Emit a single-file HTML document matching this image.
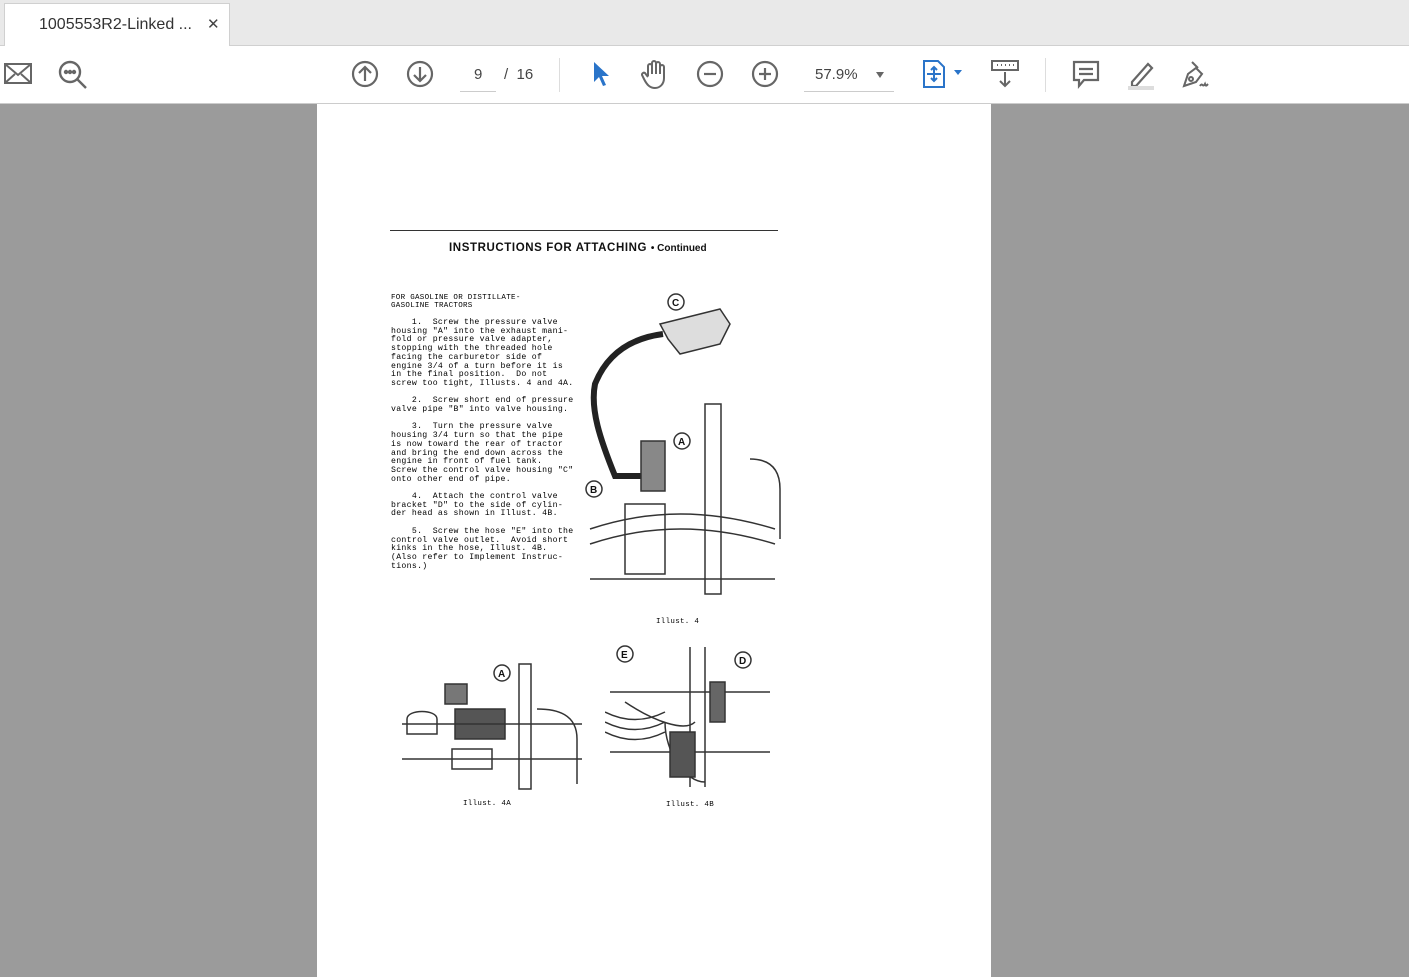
<!DOCTYPE html>
<html><head><meta charset="utf-8">
<style>
*{margin:0;padding:0;box-sizing:border-box}
body{width:1409px;height:977px;overflow:hidden;background:#9b9b9b;font-family:"Liberation Sans",sans-serif;position:relative}
#tabbar{position:absolute;left:0;top:0;width:1409px;height:46px;background:#e9e9e9;border-bottom:1px solid #d0d0d0}
#tab{position:absolute;left:4px;top:3px;width:226px;height:44px;background:#fff;border:1px solid #d0d0d0;border-bottom:none}
#tab span{position:absolute;left:34px;top:12px;font-size:16px;color:#333}
#tab b{position:absolute;left:202px;top:11px;font-size:15px;color:#444;font-weight:normal}
#tool{position:absolute;left:0;top:46px;width:1409px;height:58px;background:#fff;border-bottom:1px solid #ccc}
svg.i{position:absolute}
.txt{position:absolute;font-size:15px;color:#444}
#page{position:absolute;left:317px;top:104px;width:674px;height:873px;background:#fff}
.m{position:absolute;font-family:"Liberation Mono",monospace;font-size:8.2px;line-height:8.7px;color:#000;white-space:pre;letter-spacing:0.3px}
</style></head><body>
<div id="tabbar"><div id="tab"><span>1005553R2-Linked ...</span><b>✕</b></div></div>
<div id="tool">
<svg class="i" style="left:3px;top:16px" width="30" height="24" viewBox="0 0 30 24" fill="none" stroke="#666" stroke-width="2"><rect x="2" y="2" width="26" height="19"/><path d="M2 2l13 11 13-11M2 21l10-9M28 21l-10-9"/></svg>
<svg class="i" style="left:57px;top:13px" width="32" height="32" viewBox="0 0 32 32" fill="none" stroke="#666" stroke-width="2.4"><circle cx="13" cy="13" r="10"/><path d="M20 20l9 9"/><circle cx="9" cy="13" r="1" fill="#666"/><circle cx="13" cy="13" r="1" fill="#666"/><circle cx="17" cy="13" r="1" fill="#666"/></svg>
<svg class="i" style="left:351px;top:14px" width="28" height="28" viewBox="0 0 28 28" fill="none" stroke="#666" stroke-width="2.2"><circle cx="14" cy="14" r="12"/><path d="M14 21V7M8 13l6-6 6 6"/></svg>
<svg class="i" style="left:406px;top:14px" width="28" height="28" viewBox="0 0 28 28" fill="none" stroke="#666" stroke-width="2.2"><circle cx="14" cy="14" r="12"/><path d="M14 7v14M8 15l6 6 6-6"/></svg>
<div class="txt" style="left:474px;top:20px">9</div>
<div style="position:absolute;left:460px;top:45px;width:36px;height:1px;background:#ccc"></div>
<div class="txt" style="left:504px;top:20px">/ &nbsp;16</div>
<div style="position:absolute;left:559px;top:12px;width:1px;height:34px;background:#ddd"></div>
<svg class="i" style="left:591px;top:14px" width="20" height="28" viewBox="0 0 20 28"><path d="M3 2v20l5-5 4 9 3-1-4-9h7z" fill="#2a74c9"/></svg>
<svg class="i" style="left:640px;top:12px" width="30" height="32" viewBox="0 0 30 32" fill="none" stroke="#666" stroke-width="2"><path d="M8 18V8a2 2 0 014 0v8V5a2 2 0 014 0v11V6a2 2 0 014 0v10V9a2 2 0 014 0v11c0 6-4 10-9 10s-8-3-11-9l-2-4a2 2 0 013-2l3 4"/></svg>
<svg class="i" style="left:696px;top:14px" width="28" height="28" viewBox="0 0 28 28" fill="none" stroke="#666" stroke-width="2.2"><circle cx="14" cy="14" r="12"/><path d="M8 14h12"/></svg>
<svg class="i" style="left:751px;top:14px" width="28" height="28" viewBox="0 0 28 28" fill="none" stroke="#666" stroke-width="2.2"><circle cx="14" cy="14" r="12"/><path d="M8 14h12M14 8v12"/></svg>
<div class="txt" style="left:815px;top:20px">57.9%</div>
<div style="position:absolute;left:876px;top:26px;border:4px solid transparent;border-top:6px solid #666"></div>
<div style="position:absolute;left:804px;top:45px;width:90px;height:1px;background:#ccc"></div>
<svg class="i" style="left:922px;top:13px" width="44" height="30" viewBox="0 0 44 30" fill="none" stroke="#2a74c9" stroke-width="2"><path d="M2 2h14l6 6v20H2z"/><path d="M12 8v14M5 15h14M9 11l3-3 3 3M9 19l3 3 3-3"/><path d="M32 11h8l-4 5z" fill="#2a74c9" stroke="none"/></svg>
<svg class="i" style="left:990px;top:13px" width="30" height="30" viewBox="0 0 30 30" fill="none" stroke="#666" stroke-width="2"><rect x="2" y="2" width="26" height="9"/><path d="M7 6h1M11 6h1M15 6h1M19 6h1M23 6h1M15 13v14M10 22l5 5 5-5"/></svg>
<div style="position:absolute;left:1045px;top:12px;width:1px;height:34px;background:#ddd"></div>
<svg class="i" style="left:1072px;top:14px" width="28" height="30" viewBox="0 0 28 30" fill="none" stroke="#666" stroke-width="2.2"><path d="M2 2h24v18H12l-5 6v-6H2z"/><path d="M7 9h14M7 14h14"/></svg>
<svg class="i" style="left:1124px;top:12px" width="34" height="34" viewBox="0 0 34 34"><path d="M8 24l16-18 4 4-16 18H8z" fill="none" stroke="#666" stroke-width="2.2"/><rect x="4" y="28" width="26" height="4" fill="#ddd"/></svg>
<svg class="i" style="left:1178px;top:12px" width="34" height="34" viewBox="0 0 34 34" fill="none" stroke="#666" stroke-width="2"><path d="M6 28l4-12 8-6 6 6-6 8z"/><path d="M14 4l6 6"/><circle cx="13" cy="21" r="2"/><path d="M22 28c2-4 3 2 5-2 1 3 2 1 3 0"/></svg>
</div>
<div id="page">
<div style="position:absolute;left:73px;top:126px;width:388px;height:1px;background:#333"></div>
<div style="position:absolute;left:132px;top:138px;font-family:'Liberation Sans',sans-serif;font-weight:bold;font-size:11.5px;color:#111;letter-spacing:0.6px">INSTRUCTIONS FOR ATTACHING <span style="font-size:10px;letter-spacing:0">• Continued</span></div>
<div class="m" style="left:74px;top:190px;font-size:7.5px;line-height:8px">FOR GASOLINE OR DISTILLATE-
GASOLINE TRACTORS</div>
<div class="m" style="left:74px;top:215px">    1.  Screw the pressure valve
housing "A" into the exhaust mani-
fold or pressure valve adapter,
stopping with the threaded hole
facing the carburetor side of
engine 3/4 of a turn before it is
in the final position.  Do not
screw too tight, Illusts. 4 and 4A.

    2.  Screw short end of pressure
valve pipe "B" into valve housing.

    3.  Turn the pressure valve
housing 3/4 turn so that the pipe
is now toward the rear of tractor
and bring the end down across the
engine in front of fuel tank.
Screw the control valve housing "C"
onto other end of pipe.

    4.  Attach the control valve
bracket "D" to the side of cylin-
der head as shown in Illust. 4B.

    5.  Screw the hose "E" into the
control valve outlet.  Avoid short
kinks in the hose, Illust. 4B.
(Also refer to Implement Instruc-
tions.)</div>
<svg style="position:absolute;left:268px;top:185px" width="196" height="310" viewBox="0 0 196 310" fill="none" stroke="#333" stroke-width="1.5">
<circle cx="91" cy="13" r="8"/><text x="87" y="17" font-size="10" font-family="Liberation Sans" fill="#111" stroke="none" font-weight="bold">C</text>
<path d="M75 35l60-15 10 15-10 20-40 10-12-15z" fill="#ddd"/>
<path d="M78 45C40 50 20 70 10 95c-5 25 5 55 20 92h30" stroke-width="6" stroke="#222"/>
<rect x="120" y="115" width="16" height="190" fill="#fff"/>
<rect x="56" y="152" width="24" height="50" fill="#888"/>
<circle cx="97" cy="152" r="8"/><text x="93" y="156" font-size="10" font-family="Liberation Sans" fill="#111" stroke="none" font-weight="bold">A</text>
<circle cx="9" cy="200" r="8"/><text x="5" y="204" font-size="10" font-family="Liberation Sans" fill="#111" stroke="none" font-weight="bold">B</text>
<path d="M5 240c60-20 120-20 185 0M5 255c60-20 120-20 185 0M40 215h40v70H40zM5 290h185"/>
<path d="M165 170c20 0 30 10 30 30v50"/>
</svg>
<div class="m" style="left:339px;top:514px;font-size:7.5px">Illust. 4</div>
<svg style="position:absolute;left:80px;top:555px" width="185" height="135" viewBox="0 0 185 135" fill="none" stroke="#333" stroke-width="1.5">
<rect x="122" y="5" width="12" height="125" fill="#fff"/>
<rect x="48" y="25" width="22" height="20" fill="#777"/>
<rect x="58" y="50" width="50" height="30" fill="#555"/>
<path d="M5 65h180M5 100h180M10 60c0-10 30-10 30 0v15H10zM55 90h40v20H55zM140 50c20 0 40 5 40 30v45"/>
<circle cx="105" cy="14" r="8"/><text x="101" y="18" font-size="10" font-family="Liberation Sans" fill="#111" stroke="none" font-weight="bold">A</text>
</svg>
<div class="m" style="left:146px;top:696px;font-size:7.5px">Illust. 4A</div>
<svg style="position:absolute;left:288px;top:538px" width="170" height="150" viewBox="0 0 170 150" fill="none" stroke="#333" stroke-width="1.5">
<circle cx="20" cy="12" r="8"/><text x="16" y="16" font-size="10" font-family="Liberation Sans" fill="#111" stroke="none" font-weight="bold">E</text>
<circle cx="138" cy="18" r="8"/><text x="134" y="22" font-size="10" font-family="Liberation Sans" fill="#111" stroke="none" font-weight="bold">D</text>
<path d="M5 50h160M5 110h160M85 5v140M100 5v140M60 80c0 30 20 60 40 60M20 60c30 20 60 30 70 20"/>
<rect x="65" y="90" width="25" height="45" fill="#555"/>
<rect x="105" y="40" width="15" height="40" fill="#666"/>
<path d="M0 70c20 10 40 10 60 0M0 80c20 10 40 10 60 0M0 90c20 10 40 10 60 0"/>
</svg>
<div class="m" style="left:349px;top:697px;font-size:7.5px">Illust. 4B</div>
</div>
</body></html>
